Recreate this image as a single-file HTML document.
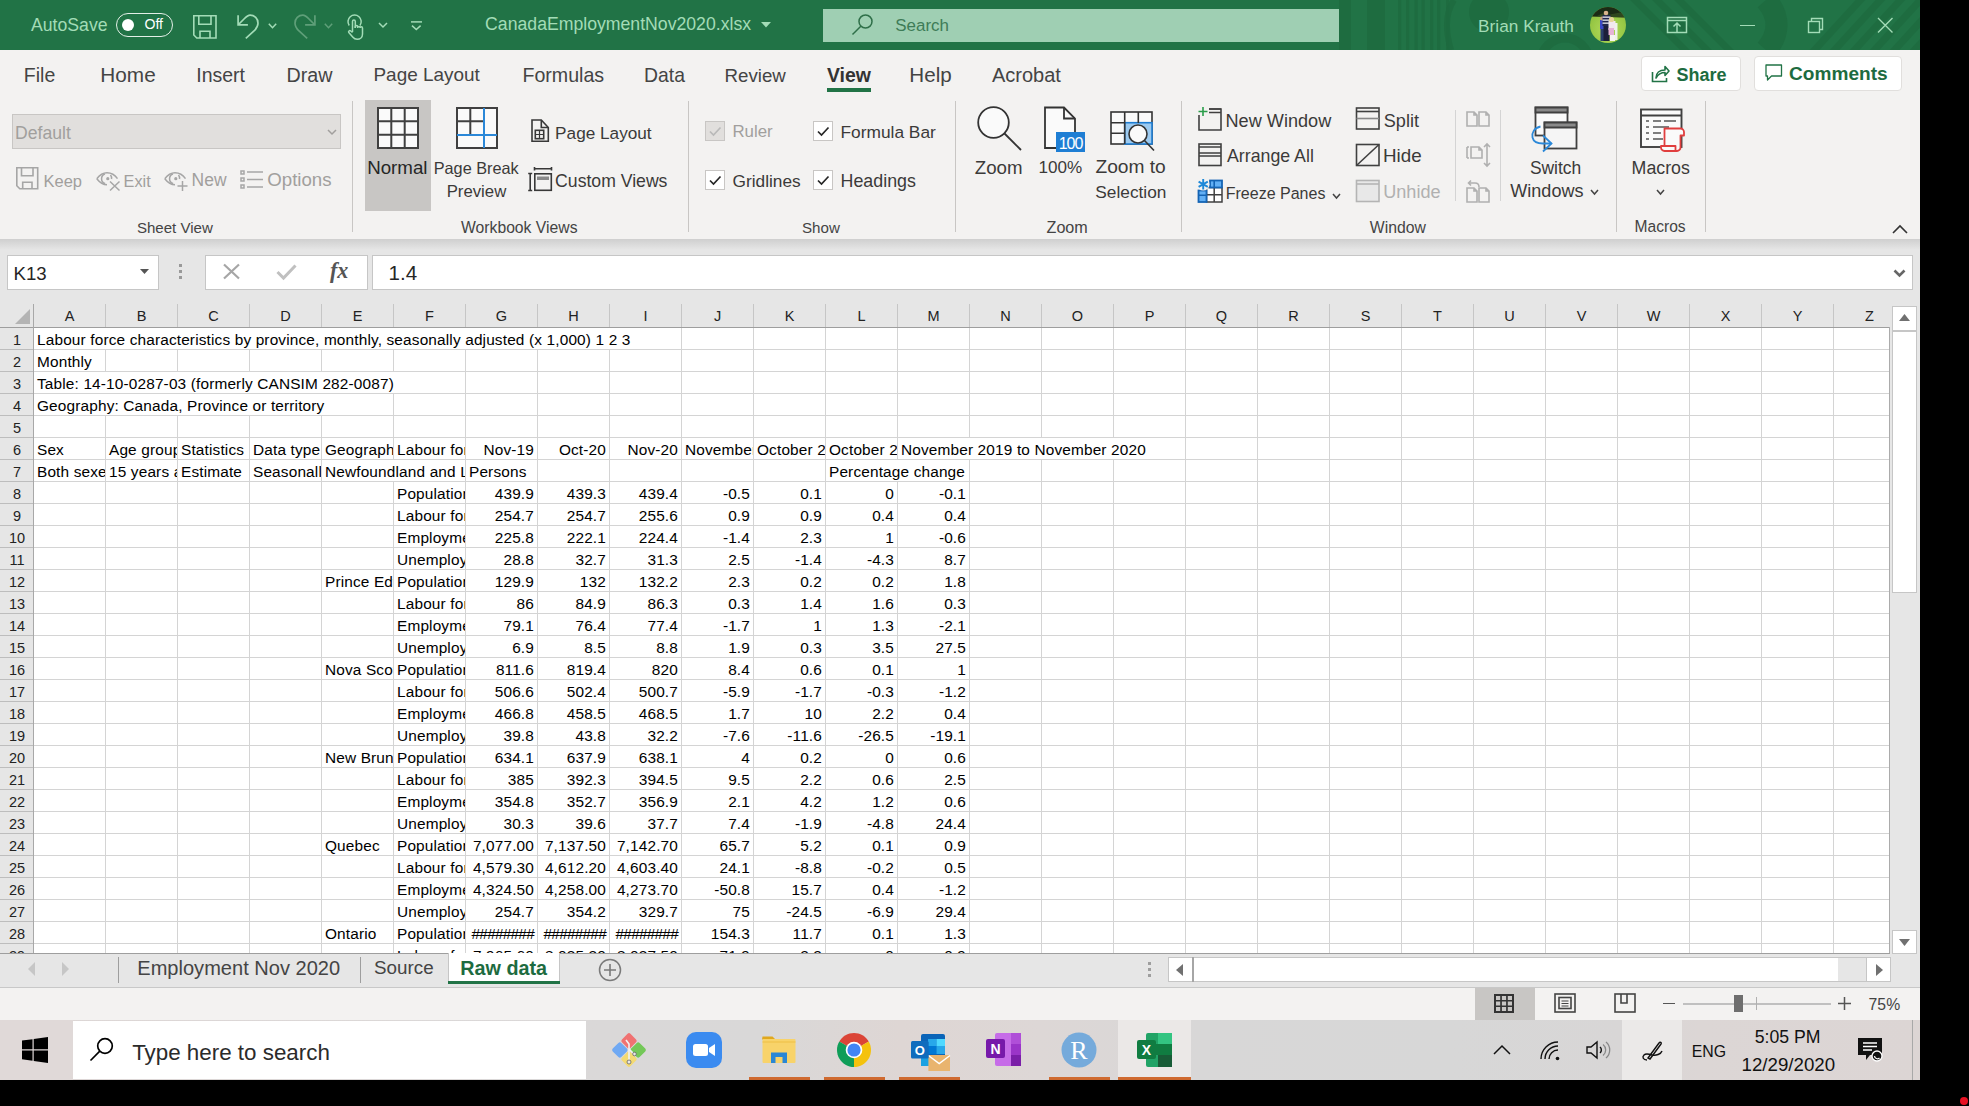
<!DOCTYPE html>
<html><head><meta charset="utf-8"><title>Excel</title>
<style>
html,body{margin:0;padding:0;background:#000}
body{width:1969px;height:1106px;background:#000;position:relative;overflow:hidden;font-family:"Liberation Sans",sans-serif}
.a{position:absolute}
.t{position:absolute;white-space:nowrap;line-height:0}
svg.a{overflow:visible}
.c{position:absolute;height:21px;overflow:hidden;white-space:nowrap;font-size:15.4px;letter-spacing:0.15px;line-height:23.6px;color:#000}
.cl{padding-left:3px;box-sizing:border-box}
.cr{padding-right:3px;box-sizing:border-box;text-align:right}
.h{letter-spacing:-0.75px}
</style></head><body>
<div class="a" style="left:0px;top:0px;width:1920px;height:50px;background:#217346"></div>
<svg class="a" style="left:1330px;top:0px;overflow:hidden" width="590" height="50" viewBox="0 0 590 50"><g fill="#1d6a3f" opacity="0.75"><rect x="9" y="0" width="12" height="50"/><rect x="37" y="0" width="18" height="50"/><rect x="68" y="0" width="3.2" height="50"/><rect x="76" y="0" width="3.2" height="50"/><rect x="84.5" y="0" width="3.2" height="50"/><rect x="91.5" y="0" width="3.2" height="50"/><rect x="100" y="0" width="3.2" height="50"/><rect x="107" y="0" width="3.2" height="50"/><rect x="116" y="0" width="3.2" height="50"/><circle cx="159" cy="12" r="20"/></g><g fill="none" stroke="#1d6a3f" opacity="0.75"><path d="M124 0c-8 12-9 30-3 50" stroke-width="6"/><circle cx="235" cy="62" r="24" stroke-width="9"/><circle cx="310" cy="40" r="140" stroke-width="0"/><path d="M436 0c14 16 14 34 0 50" stroke-width="22"/></g><g stroke="#1d6a3f" stroke-width="7" opacity="0.75"><line x1="300" y1="-5" x2="360" y2="55"/><line x1="322" y1="-5" x2="382" y2="55"/><line x1="344" y1="-5" x2="404" y2="55"/><line x1="480" y1="55" x2="535" y2="-5"/><line x1="500" y1="55" x2="555" y2="-5"/><line x1="520" y1="55" x2="575" y2="-5"/><line x1="540" y1="55" x2="595" y2="-5"/><line x1="560" y1="55" x2="615" y2="-5"/><line x1="580" y1="55" x2="635" y2="-5"/></g></svg>
<div class="t" style="left:31.00px;top:24.87px;font-size:17.67px;color:#a3dcb7;font-weight:400;">AutoSave</div>
<div class="a" style="left:116px;top:12.5px;width:57px;height:24px;border:1.6px solid #e3efe7;border-radius:12px;box-sizing:border-box"></div>
<div class="a" style="left:122px;top:18.5px;width:12px;height:12px;background:#fff;border-radius:50%"></div>
<div class="t" style="left:144.44px;top:24.12px;font-size:14.09px;color:#fff;font-weight:400;">Off</div>
<svg class="a" style="left:193px;top:15px;" width="25" height="25" viewBox="0 0 25 25"><g fill="none" stroke="#a3dcb7" stroke-width="1.6"><path d="M0.8 0.8H23V23H3.8L0.8 20z"/><path d="M5.8 0.8V9.3H18V0.8"/><path d="M7 23V16.3H17V23"/></g></svg>
<svg class="a" style="left:236px;top:14px;" width="24" height="26" viewBox="0 0 24 26"><g fill="none" stroke="#a3dcb7" stroke-width="1.7"><path d="M2.1 1.2V10.8H11.9"/><path d="M2.5 10.5L8 5C10 3 12 1.2 14.1 1.2 18.5 1.2 22 4.5 22 9.2 22 12 20.5 14.5 18 17L9.8 24.3"/></g></svg>
<svg class="a" style="left:268px;top:23px;" width="9" height="6" viewBox="0 0 9 6"><path d="M0.8 0.8l3.7 3.9 3.7-3.9" fill="none" stroke="#a3dcb7" stroke-width="1.5"/></svg>
<svg class="a" style="left:293px;top:14px;" width="24" height="26" viewBox="0 0 24 26"><g fill="none" stroke="#5f9f79" stroke-width="1.7"><path d="M21.9 1.2V10.8H12.1"/><path d="M21.5 10.5L16 5C14 3 12 1.2 9.9 1.2 5.5 1.2 2 4.5 2 9.2 2 12 3.5 14.5 6 17L14.2 24.3"/></g></svg>
<svg class="a" style="left:324px;top:23px;" width="9" height="6" viewBox="0 0 9 6"><path d="M0.8 0.8l3.7 3.9 3.7-3.9" fill="none" stroke="#5f9f79" stroke-width="1.5"/></svg>
<svg class="a" style="left:346px;top:14px;" width="19" height="26" viewBox="0 0 19 26"><g fill="none" stroke="#a3dcb7" stroke-width="1.5" stroke-linejoin="round"><path d="M3.2 11.5A6.6 6.6 0 1 1 14 11.5"/><path d="M6.5 18V7.5a1.4 1.4 0 0 1 2.8 0V14"/><path d="M9.3 14v-1.2a1.2 1.2 0 0 1 2.4 0V14M11.7 13.6a1.2 1.2 0 0 1 2.4 0V14M14.1 14a1.2 1.2 0 0 1 2.4 0V20c0 3.5-2.5 5.3-5.3 5.3-2 0-3.3-0.8-4.5-2.3L2.8 18.6c-0.8-1.2 0.7-2.6 1.9-1.6L6.5 18.5"/></g></svg>
<svg class="a" style="left:378px;top:22px;" width="10" height="6" viewBox="0 0 10 6"><path d="M1 1l4 4 4-4" fill="none" stroke="#a3dcb7" stroke-width="1.5"/></svg>
<svg class="a" style="left:410px;top:14px;" width="13" height="18" viewBox="0 0 13 18"><g fill="none" stroke="#a3dcb7" stroke-width="1.5"><path d="M1 7.9h11"/><path d="M2 11.6l4.3 4 4.3-4"/></g></svg>
<div class="t" style="left:485.12px;top:23.88px;font-size:17.66px;color:#a3dcb7;font-weight:400;">CanadaEmploymentNov2020.xlsx</div>
<svg class="a" style="left:761px;top:22px;" width="10" height="6" viewBox="0 0 10 6"><path d="M0 0h10L5 5.5z" fill="#a3dcb7"/></svg>
<div class="a" style="left:823px;top:9px;width:516px;height:33px;background:#9fcfb3"></div>
<svg class="a" style="left:850px;top:13px;" width="24" height="24" viewBox="0 0 24 24"><g fill="none" stroke="#2f6f49" stroke-width="1.5"><circle cx="15.5" cy="8.5" r="6.5"/><path d="M10.8 13.2L2.5 21.5"/></g></svg>
<div class="t" style="left:895.32px;top:26.13px;font-size:16.93px;color:#3e7c57;font-weight:400;">Search</div>
<div class="t" style="left:1478.12px;top:25.52px;font-size:17.24px;color:#a3dcb7;font-weight:400;">Brian Krauth</div>
<svg class="a" style="left:1590px;top:7px;" width="36" height="36" viewBox="0 0 36 36"><defs><clipPath id="avc"><circle cx="18" cy="18" r="18"/></clipPath><radialGradient id="avg" cx="0.5" cy="0.65" r="0.6"><stop offset="0" stop-color="#b6dc5c"/><stop offset="1" stop-color="#8fc23f"/></radialGradient></defs><g clip-path="url(#avc)"><rect width="36" height="36" fill="url(#avg)"/><path d="M0 0H36V10.5L0 9.5z" fill="#1b2b15"/><path d="M6 9.5l6-3 8 1 10-2 6 5z" fill="#3d5a25" opacity="0.6"/><rect x="10" y="13" width="4.5" height="9" fill="#3b48c8"/><rect x="10.5" y="22" width="3.5" height="12" fill="#2a3f6a"/><circle cx="12" cy="11.5" r="1.9" fill="#c89f7f"/><rect x="12.5" y="8" width="8" height="11" fill="#22264a"/><rect x="12.5" y="9.5" width="8" height="1.3" fill="#e8e8f0"/><rect x="12.5" y="12.5" width="8" height="1.3" fill="#e8e8f0"/><rect x="12.5" y="15.5" width="8" height="1.3" fill="#e8e8f0"/><rect x="13.5" y="19" width="6" height="15" fill="#1c1f3a"/><circle cx="16" cy="6" r="2.3" fill="#d9b38c"/><rect x="18.5" y="14" width="7" height="9" fill="#f2e8ee"/><rect x="18.5" y="21" width="5.5" height="7" fill="#e6b3d6"/><rect x="20" y="28" width="5" height="6" fill="#f5f5f0"/><circle cx="21.5" cy="12.5" r="2.6" fill="#e8d49a"/><rect x="25" y="16" width="2.5" height="17" fill="#eef2ea"/></g></svg>
<svg class="a" style="left:1666px;top:16px;" width="22" height="18" viewBox="0 0 22 18"><g fill="none" stroke="#a3dcb7" stroke-width="1.5"><rect x="1.5" y="1.5" width="19" height="15"/><path d="M1.5 4.5h19"/><path d="M11 16.5V7M7.5 10.5L11 7l3.5 3.5"/></g></svg>
<div class="a" style="left:1739.5px;top:25px;width:15.5px;height:1.3px;background:#a3dcb7"></div>
<svg class="a" style="left:1807px;top:17px;" width="18" height="17" viewBox="0 0 18 17"><g fill="none" stroke="#a3dcb7" stroke-width="1.4"><rect x="1.5" y="4.5" width="11" height="11"/><path d="M4.5 4.5V1.5h11v11h-3"/></g></svg>
<svg class="a" style="left:1877px;top:17px;" width="16" height="16" viewBox="0 0 16 16"><path d="M1 1l14.5 14.5M15.5 1L1 15.5" fill="none" stroke="#a3dcb7" stroke-width="1.4"/></svg>
<div class="a" style="left:0px;top:50px;width:1920px;height:189px;background:#f3f2f1"></div>
<div class="t" style="left:23.84px;top:75.23px;font-size:19.53px;color:#444;font-weight:400;">File</div>
<div class="t" style="left:100.34px;top:74.80px;font-size:20.77px;color:#444;font-weight:400;">Home</div>
<div class="t" style="left:196.25px;top:75.25px;font-size:19.48px;color:#444;font-weight:400;">Insert</div>
<div class="t" style="left:286.42px;top:75.16px;font-size:19.72px;color:#444;font-weight:400;">Draw</div>
<div class="t" style="left:373.48px;top:75.43px;font-size:18.96px;color:#444;font-weight:400;">Page Layout</div>
<div class="t" style="left:522.43px;top:75.20px;font-size:19.62px;color:#444;font-weight:400;">Formulas</div>
<div class="t" style="left:644.05px;top:75.29px;font-size:19.35px;color:#444;font-weight:400;">Data</div>
<div class="t" style="left:724.50px;top:75.51px;font-size:18.71px;color:#444;font-weight:400;">Review</div>
<div class="t" style="left:909.35px;top:74.85px;font-size:20.61px;color:#444;font-weight:400;">Help</div>
<div class="t" style="left:992.00px;top:75.06px;font-size:20.01px;color:#444;font-weight:400;">Acrobat</div>
<div class="t" style="left:827.00px;top:75.26px;font-size:19.44px;color:#333;font-weight:700;">View</div>
<div class="a" style="left:827px;top:88px;width:44px;height:4px;background:#217346"></div>
<div class="a" style="left:1640.5px;top:55.5px;width:100px;height:35px;background:#fff;border:1px solid #e1dfdd;border-radius:4px;box-sizing:border-box"></div>
<svg class="a" style="left:1651px;top:64px;" width="19" height="19" viewBox="0 0 19 19"><g fill="none" stroke="#217346" stroke-width="1.6"><path d="M1.5 8v9.5h14V14"/><path d="M5 14c0-5 3.5-8 9-8V2.5l4 4.5-4 4.5V8.5c-4 0-7 2-9 5.5z" stroke-linejoin="round"/></g></svg>
<div class="t" style="left:1676.44px;top:74.76px;font-size:18.00px;color:#1d6b40;font-weight:700;">Share</div>
<div class="a" style="left:1753.5px;top:55.5px;width:148px;height:35px;background:#fff;border:1px solid #e1dfdd;border-radius:4px;box-sizing:border-box"></div>
<svg class="a" style="left:1765px;top:64px;" width="18" height="18" viewBox="0 0 18 18"><g fill="none" stroke="#217346" stroke-width="1.3"><path d="M1 1h15.5v11H6.5L2.5 16V12H1z" stroke-linejoin="round"/></g></svg>
<div class="t" style="left:1789.04px;top:74.38px;font-size:19.09px;color:#1d6b40;font-weight:700;">Comments</div>
<div class="a" style="left:12px;top:114px;width:329px;height:35px;background:#e1dfdd;border:1px solid #c8c6c4;box-sizing:border-box"></div>
<div class="t" style="left:15.09px;top:132.89px;font-size:17.63px;color:#a19f9d;font-weight:400;">Default</div>
<svg class="a" style="left:327px;top:129px;" width="10" height="6" viewBox="0 0 10 6"><path d="M1 1l4.0 4l4.0 -4" fill="none" stroke="#a19f9d" stroke-width="1.5"/></svg>
<svg class="a" style="left:16px;top:167px;" width="23" height="23" viewBox="0 0 23 23"><g fill="none" stroke="#a6a6a6" stroke-width="1.6"><path d="M0.8 0.8H21.7V21.7H3.8L0.8 18.7z"/><path d="M5.5 0.8V8.8H17V0.8"/><path d="M6.7 21.7V15.3H16V21.7"/></g></svg>
<div class="t" style="left:43.48px;top:180.78px;font-size:16.49px;color:#a19f9d;font-weight:400;">Keep</div>
<svg class="a" style="left:96px;top:171px;" width="25" height="21" viewBox="0 0 25 21"><g fill="none" stroke="#a6a6a6" stroke-width="1.5"><path d="M0.8 7.7C4 3.5 8 1.8 11 1.8s7.5 1.5 10.5 5.9"/><path d="M0.8 7.7C4 11.8 8 13.7 11 13.7"/><path d="M9 3a5 5 0 0 0 0 9.5"/><path d="M14.5 4a5 5 0 0 1 1 4"/></g><circle cx="11.8" cy="7.7" r="1.6" fill="#a6a6a6"/><path d="M14 10.5l9.5 9M23.5 10.5l-9.5 9" stroke="#a6a6a6" stroke-width="1.5"/></svg>
<div class="t" style="left:123.60px;top:180.85px;font-size:16.30px;color:#a19f9d;font-weight:400;">Exit</div>
<svg class="a" style="left:164px;top:171px;" width="25" height="21" viewBox="0 0 25 21"><g fill="none" stroke="#a6a6a6" stroke-width="1.5"><path d="M0.8 7.7C4 3.5 8 1.8 11 1.8s7.5 1.5 10.5 5.9"/><path d="M0.8 7.7C4 11.8 8 13.7 11 13.7"/><path d="M9 3a5 5 0 0 0 0 9.5"/><path d="M14.5 4a5 5 0 0 1 1 4"/></g><circle cx="11.8" cy="7.7" r="1.6" fill="#a6a6a6"/><path d="M18.5 10v10M13.5 15h10" stroke="#a6a6a6" stroke-width="1.5"/></svg>
<div class="t" style="left:191.60px;top:180.44px;font-size:17.48px;color:#a19f9d;font-weight:400;">New</div>
<svg class="a" style="left:240px;top:170px;" width="23" height="19" viewBox="0 0 23 19"><g fill="none" stroke="#a6a6a6" stroke-width="1.5"><rect x="1" y="1" width="3" height="3"/><rect x="1" y="8" width="3" height="3"/><rect x="1" y="15" width="3" height="3"/><path d="M7 2h16M7 9.5h16M7 17h16"/></g></svg>
<div class="t" style="left:267.25px;top:180.03px;font-size:18.66px;color:#a19f9d;font-weight:400;">Options</div>
<div class="t" style="left:136.90px;top:227.77px;font-size:15.07px;color:#444;font-weight:400;">Sheet View</div>
<div class="a" style="left:352px;top:101px;width:1px;height:131px;background:#c8c6c4"></div>
<div class="a" style="left:365px;top:100px;width:66px;height:111px;background:#c8c6c4"></div>
<svg class="a" style="left:377px;top:107px;" width="42" height="42" viewBox="0 0 42 42"><rect x="1" y="1" width="40" height="40" fill="#fafafa"/><g fill="none" stroke="#404040" stroke-width="2"><rect x="1" y="1" width="40" height="40"/><path d="M14.3 1v40M27.7 1v40M1 14.3h40M1 27.7h40"/></g></svg>
<div class="t" style="left:367.20px;top:167.51px;font-size:18.73px;color:#262626;font-weight:400;">Normal</div>
<svg class="a" style="left:456px;top:107px;" width="42" height="42" viewBox="0 0 42 42"><rect x="1" y="1" width="40" height="40" fill="#fafafa"/><g fill="none" stroke="#404040" stroke-width="2"><rect x="1" y="1" width="40" height="40"/><path d="M14.3 1v27M1 14.3h27"/></g><g stroke="#2b88d8" stroke-width="2"><path d="M28 1v40M1 28h40"/></g></svg>
<div class="t" style="left:433.70px;top:168.36px;font-size:16.27px;color:#3b3a39;font-weight:400;">Page Break</div>
<div class="t" style="left:446.66px;top:192.19px;font-size:16.76px;color:#3b3a39;font-weight:400;">Preview</div>
<svg class="a" style="left:530px;top:118px;" width="20" height="26" viewBox="0 0 20 26"><g fill="none" stroke="#383838" stroke-width="1.6"><path d="M2 2h9.3l7 7.5v13.8H2z"/><path d="M11.3 2v7.5h7"/><rect x="5.3" y="12.3" width="8.4" height="8.4"/><path d="M9.5 12.3v8.4M5.3 16.5h8.4" stroke-width="1.2"/></g></svg>
<div class="t" style="left:555.12px;top:132.53px;font-size:17.21px;color:#3b3a39;font-weight:400;">Page Layout</div>
<svg class="a" style="left:527px;top:166px;" width="26" height="26" viewBox="0 0 26 26"><g fill="none" stroke="#383838" stroke-width="1.6"><path d="M3.2 7.5V24.5M1.2 7.5h4M1.2 24.5h4"/><path d="M7.5 2.8H24.5M7.5 1v3.6M24.5 1v3.6"/><rect x="7.8" y="7.8" width="16.5" height="16.5"/></g><rect x="10" y="10.5" width="12" height="3.5" fill="#8a8a8a"/></svg>
<div class="t" style="left:555.12px;top:180.88px;font-size:17.64px;color:#3b3a39;font-weight:400;">Custom Views</div>
<div class="t" style="left:461.00px;top:227.55px;font-size:15.72px;color:#444;font-weight:400;">Workbook Views</div>
<div class="a" style="left:688px;top:101px;width:1px;height:131px;background:#c8c6c4"></div>
<div class="a" style="left:705px;top:121px;width:20px;height:20px;background:#e1dfdd;border:1.5px solid #c8c6c4;box-sizing:border-box"></div>
<svg class="a" style="left:705px;top:121px;" width="20" height="20" viewBox="0 0 20 20"><path d="M5 10.5l3.5 3.5 7-7.5" fill="none" stroke="#b9b9b9" stroke-width="1.7"/></svg>
<div class="t" style="left:732.45px;top:132.16px;font-size:16.85px;color:#a19f9d;font-weight:400;">Ruler</div>
<div class="a" style="left:813px;top:121px;width:20px;height:20px;background:#fff;border:1.5px solid #c8c6c4;box-sizing:border-box"></div>
<svg class="a" style="left:813px;top:121px;" width="20" height="20" viewBox="0 0 20 20"><path d="M5 10.5l3.5 3.5 7-7.5" fill="none" stroke="#262626" stroke-width="1.7"/></svg>
<div class="t" style="left:840.51px;top:131.99px;font-size:17.34px;color:#3b3a39;font-weight:400;">Formula Bar</div>
<div class="a" style="left:705px;top:170px;width:20px;height:20px;background:#fff;border:1.5px solid #c8c6c4;box-sizing:border-box"></div>
<svg class="a" style="left:705px;top:170px;" width="20" height="20" viewBox="0 0 20 20"><path d="M5 10.5l3.5 3.5 7-7.5" fill="none" stroke="#262626" stroke-width="1.7"/></svg>
<div class="t" style="left:732.54px;top:181.01px;font-size:17.28px;color:#3b3a39;font-weight:400;">Gridlines</div>
<div class="a" style="left:813px;top:170px;width:20px;height:20px;background:#fff;border:1.5px solid #c8c6c4;box-sizing:border-box"></div>
<svg class="a" style="left:813px;top:170px;" width="20" height="20" viewBox="0 0 20 20"><path d="M5 10.5l3.5 3.5 7-7.5" fill="none" stroke="#262626" stroke-width="1.7"/></svg>
<div class="t" style="left:840.57px;top:180.82px;font-size:17.84px;color:#3b3a39;font-weight:400;">Headings</div>
<div class="t" style="left:801.99px;top:227.75px;font-size:15.15px;color:#444;font-weight:400;">Show</div>
<div class="a" style="left:955px;top:101px;width:1px;height:131px;background:#c8c6c4"></div>
<svg class="a" style="left:977px;top:106px;" width="46" height="46" viewBox="0 0 46 46"><g fill="#fafafa" stroke="#333" stroke-width="1.8"><circle cx="16.5" cy="16.5" r="15.3"/><path d="M27.5 27.5L44 44" fill="none"/></g></svg>
<div class="t" style="left:974.74px;top:167.51px;font-size:18.72px;color:#3b3a39;font-weight:400;">Zoom</div>
<svg class="a" style="left:1044px;top:106px;" width="42" height="47" viewBox="0 0 42 47"><path d="M1 1.5h19l11 11V42H1z" fill="#fafafa" stroke="#333" stroke-width="1.8"/><path d="M20 1.5v11h11" fill="none" stroke="#333" stroke-width="1.8"/><rect x="12" y="26" width="29" height="20" fill="#1e7ed4"/><text x="26.5" y="42.5" font-family="Liberation Sans" font-size="16" fill="#fff" text-anchor="middle" letter-spacing="-1">100</text></svg>
<div class="t" style="left:1038.60px;top:168.08px;font-size:17.08px;color:#3b3a39;font-weight:400;">100%</div>
<svg class="a" style="left:1110px;top:111px;" width="46" height="41" viewBox="0 0 46 41"><g fill="#fafafa" stroke="#333" stroke-width="1.6"><rect x="1" y="1" width="41" height="32"/></g><rect x="14.7" y="11.7" width="27.3" height="21.3" fill="#9ccaf0" stroke="#1e7ed4" stroke-width="1.6"/><g stroke="#333" stroke-width="1.6" fill="none"><path d="M14.7 1v32M28.3 1v11M1 11.7h14M1 22.3h14"/></g><circle cx="28" cy="23" r="9" fill="#fafafa" stroke="#333" stroke-width="1.6"/><path d="M34.5 29.5L44 39.5" stroke="#333" stroke-width="1.6"/></svg>
<div class="t" style="left:1095.42px;top:167.34px;font-size:19.21px;color:#3b3a39;font-weight:400;">Zoom to</div>
<div class="t" style="left:1095.31px;top:192.00px;font-size:17.30px;color:#3b3a39;font-weight:400;">Selection</div>
<div class="t" style="left:1046.52px;top:227.40px;font-size:16.16px;color:#444;font-weight:400;">Zoom</div>
<div class="a" style="left:1181px;top:101px;width:1px;height:131px;background:#c8c6c4"></div>
<svg class="a" style="left:1197px;top:106px;" width="27" height="25" viewBox="0 0 27 25"><g fill="none" stroke="#404040" stroke-width="1.6"><path d="M2 9v15h22V3H12"/><path d="M12 3h12M12 6.5h12" stroke-width="1.4"/></g><path d="M6 1v9M1.5 5.5h9" stroke="#2a9d4a" stroke-width="1.6"/></svg>
<div class="t" style="left:1225.55px;top:120.71px;font-size:18.13px;color:#3b3a39;font-weight:400;">New Window</div>
<svg class="a" style="left:1197px;top:142px;" width="27" height="25" viewBox="0 0 27 25"><g fill="none" stroke="#404040" stroke-width="1.6"><rect x="2" y="2" width="22" height="21.5"/><path d="M2 5h22M2 11h22M2 14h22"/></g></svg>
<div class="t" style="left:1227.00px;top:156.35px;font-size:17.75px;color:#3b3a39;font-weight:400;">Arrange All</div>
<svg class="a" style="left:1197px;top:178px;" width="27" height="25" viewBox="0 0 27 25"><g fill="#ffffff" stroke="#404040" stroke-width="1.5"><path d="M9.5 9.5H25V24H9.5z"/><path d="M17.2 9.5V24M9.5 16.7H25" fill="none"/></g><g fill="#62b0f5" stroke="#1464b4" stroke-width="1.8"><rect x="13" y="2.5" width="12" height="7"/><rect x="1.5" y="12.5" width="8" height="11.5"/></g><path d="M17.2 2.5v7M1.5 17.2h8" stroke="#1464b4" stroke-width="1.6"/><circle cx="6.2" cy="6.3" r="6.3" fill="#f3f2f1"/><g stroke="#1e88d8" stroke-width="1.9"><path d="M6.2 1v10.6M1.6 3.6l9.2 5.3M1.6 8.9l9.2-5.3"/></g></svg>
<div class="t" style="left:1225.72px;top:192.94px;font-size:16.02px;color:#3b3a39;font-weight:400;">Freeze Panes</div>
<svg class="a" style="left:1332px;top:193px;" width="9" height="6" viewBox="0 0 9 6"><path d="M1 1l3.5 4l3.5 -4" fill="none" stroke="#444" stroke-width="1.5"/></svg>
<svg class="a" style="left:1355px;top:106px;" width="26" height="25" viewBox="0 0 26 25"><g fill="none" stroke="#404040" stroke-width="1.6"><rect x="1.5" y="2" width="22.5" height="21"/><path d="M1.5 5.5h22.5"/><path d="M1.5 12.5h22.5" stroke="#888"/></g></svg>
<div class="t" style="left:1383.78px;top:120.73px;font-size:18.09px;color:#3b3a39;font-weight:400;">Split</div>
<svg class="a" style="left:1355px;top:143px;" width="26" height="24" viewBox="0 0 26 24"><g fill="none" stroke="#404040" stroke-width="1.6"><rect x="1.5" y="1.5" width="22.5" height="21"/><path d="M1.5 22.5L24 1.5"/></g></svg>
<div class="t" style="left:1383.00px;top:155.98px;font-size:18.81px;color:#3b3a39;font-weight:400;">Hide</div>
<svg class="a" style="left:1355px;top:179px;" width="26" height="24" viewBox="0 0 26 24"><rect x="1.5" y="1.5" width="22.5" height="21" fill="#e8e8e8" stroke="#b4b4b4" stroke-width="1.6"/><path d="M1.5 5h22.5" stroke="#b4b4b4" stroke-width="1.6"/></svg>
<div class="t" style="left:1383.23px;top:192.22px;font-size:18.12px;color:#b0b0b0;font-weight:400;">Unhide</div>
<div class="t" style="left:1369.80px;top:227.53px;font-size:15.77px;color:#444;font-weight:400;">Window</div>
<div class="a" style="left:1455px;top:110px;width:1px;height:91px;background:#d4d4d4"></div>
<div class="a" style="left:1500px;top:110px;width:1px;height:91px;background:#d4d4d4"></div>
<svg class="a" style="left:1466px;top:111px;" width="25" height="16" viewBox="0 0 25 16"><g fill="none" stroke="#b0b0b0" stroke-width="1.6"><path d="M1 1h7l3 3v11H1zM8 1v3h3"/><path d="M13 1h7l3 3v11H13zM20 1v3h3"/></g></svg>
<svg class="a" style="left:1466px;top:143px;" width="25" height="24" viewBox="0 0 25 24"><g fill="none" stroke="#b0b0b0" stroke-width="1.6"><path d="M1 4v11M1 4h2M1 15h2"/><path d="M5 4h8l3 3v8H5zM13 4v3h3"/><path d="M21 1v22M18 4l3-3 3 3M18 20l3 3 3-3"/></g></svg>
<svg class="a" style="left:1466px;top:179px;" width="25" height="24" viewBox="0 0 25 24"><g fill="none" stroke="#b0b0b0" stroke-width="1.6"><path d="M1 9h7l3 3v11H1zM8 9v3h3"/><path d="M13 9h7l3 3v11H13zM20 9v3h3"/><path d="M3 4h6c3 0 4 1.5 4 4M5 1.5L2.5 4 5 6.5"/></g></svg>
<svg class="a" style="left:1531px;top:106px;" width="47" height="47" viewBox="0 0 47 47"><rect x="4.5" y="1.5" width="32" height="28" fill="#fafafa" stroke="#404040" stroke-width="1.8"/><rect x="4.5" y="1.5" width="32" height="5" fill="#8a8a8a"/><rect x="13.5" y="16.5" width="32" height="26" fill="#f5f5f5" stroke="#404040" stroke-width="1.8"/><rect x="13.5" y="16.5" width="32" height="5" fill="#8a8a8a"/><path d="M4.5 1.5h32v5h-32zM13.5 16.5h32v5h-32z" fill="none" stroke="#404040" stroke-width="1.8"/><g fill="none" stroke="#2b88d8" stroke-width="1.8"><path d="M9.5 20.5C3 22 0.5 27 1.5 31.5S6.5 37.5 12 37.5h8.5"/><path d="M12 29.5l8.5 8-8.5 8"/></g></svg>
<div class="t" style="left:1529.90px;top:167.95px;font-size:17.44px;color:#3b3a39;font-weight:400;">Switch</div>
<div class="t" style="left:1510.30px;top:191.24px;font-size:18.05px;color:#3b3a39;font-weight:400;">Windows</div>
<svg class="a" style="left:1590px;top:189px;" width="9" height="6" viewBox="0 0 9 6"><path d="M1 1l3.5 4l3.5 -4" fill="none" stroke="#444" stroke-width="1.5"/></svg>
<div class="a" style="left:1616px;top:101px;width:1px;height:131px;background:#c8c6c4"></div>
<svg class="a" style="left:1639px;top:107px;" width="48" height="46" viewBox="0 0 48 46"><rect x="2" y="2.5" width="40.5" height="37.5" fill="#fafafa" stroke="#404040" stroke-width="1.9"/><path d="M2 8.5h40.5" stroke="#404040" stroke-width="1.9"/><g stroke="#555" stroke-width="1.7"><path d="M7 14h3M14 14h8M25 14h12M7 20h3M14 20h16M7 26h3M14 26h8M7 32h3M14 32h10"/></g><path d="M25.5 38.5V21.5H41.5a3.5 3.5 0 0 1 3.5 3.5v3.5h-3.5V40.5a3.5 3.5 0 0 1-3.5 3.5H25.5a3.5 3.5 0 0 1-3.5-3.5v-1.5H36.5v5" fill="#fafafa" stroke="#e03e3e" stroke-width="1.8" stroke-linejoin="round"/></svg>
<div class="t" style="left:1631.58px;top:167.84px;font-size:17.77px;color:#3b3a39;font-weight:400;">Macros</div>
<svg class="a" style="left:1656px;top:189px;" width="9" height="6" viewBox="0 0 9 6"><path d="M1 1l3.5 4l3.5 -4" fill="none" stroke="#444" stroke-width="1.5"/></svg>
<div class="t" style="left:1634.55px;top:227.09px;font-size:15.59px;color:#444;font-weight:400;">Macros</div>
<div class="a" style="left:1705px;top:101px;width:1px;height:131px;background:#c8c6c4"></div>
<svg class="a" style="left:1892px;top:224px;" width="16" height="10" viewBox="0 0 16 10"><path d="M1 9l7-7 7 7" fill="none" stroke="#333" stroke-width="1.6"/></svg>
<div class="a" style="left:0px;top:239px;width:1920px;height:65px;background:#e6e6e6"></div>
<div class="a" style="left:0px;top:239px;width:1920px;height:11px;background:linear-gradient(#cfcfcf,#e6e6e6)"></div>
<div class="a" style="left:7px;top:255px;width:152px;height:35px;background:#fff;border:1px solid #c6c6c6;box-sizing:border-box"></div>
<div class="t" style="left:13.51px;top:273.54px;font-size:18.64px;color:#262626;font-weight:400;">K13</div>
<svg class="a" style="left:140px;top:269px;" width="9" height="6" viewBox="0 0 9 6"><path d="M0 0h9L4.5 5z" fill="#555"/></svg>
<div class="a" style="left:179px;top:264px;width:3px;height:3px;background:#999"></div>
<div class="a" style="left:179px;top:270px;width:3px;height:3px;background:#999"></div>
<div class="a" style="left:179px;top:276px;width:3px;height:3px;background:#999"></div>
<div class="a" style="left:205px;top:255px;width:163px;height:35px;background:#fff;border:1px solid #c6c6c6;box-sizing:border-box"></div>
<svg class="a" style="left:222px;top:263px;" width="19" height="17" viewBox="0 0 19 17"><path d="M2 1.5l15 14M17 1.5l-15 14" fill="none" stroke="#a6a6a6" stroke-width="2.2"/></svg>
<svg class="a" style="left:276px;top:264px;" width="21" height="16" viewBox="0 0 21 16"><path d="M1.5 8l6 6L19.5 1.5" fill="none" stroke="#c0c0c0" stroke-width="3"/></svg>
<div class="t" style="left:330.00px;top:271.34px;font-size:22.09px;color:#555;font-weight:700;font-family:'Liberation Serif',serif;"><i>fx</i></div>
<div class="a" style="left:372px;top:255px;width:1541px;height:35px;background:#fff;border:1px solid #c6c6c6;box-sizing:border-box"></div>
<div class="t" style="left:388.56px;top:272.87px;font-size:20.56px;color:#262626;font-weight:400;">1.4</div>
<svg class="a" style="left:1893px;top:269px;" width="13" height="10" viewBox="0 0 13 10"><path d="M1.5 1.5l5 5 5-5" fill="none" stroke="#666" stroke-width="2.6"/></svg>
<div class="a" style="left:0px;top:304px;width:1890px;height:23px;background:#e6e6e6"></div>
<div class="a" style="left:0px;top:327px;width:1890px;height:1px;background:#9e9e9e"></div>
<div class="a" style="left:0px;top:328px;width:33px;height:625px;background:#e6e6e6"></div>
<div class="a" style="left:33px;top:304px;width:1px;height:649px;background:#a8a8a8"></div>
<svg class="a" style="left:14px;top:308px;" width="17" height="17" viewBox="0 0 17 17"><path d="M1 16L16 1v15z" fill="#b4b4b4"/></svg>
<div class="a" style="left:105px;top:304px;width:1px;height:23px;background:#c6c6c6"></div>
<div class="t" style="left:34px;width:71px;text-align:center;top:315.57px;font-size:14.5px;color:#222">A</div>
<div class="a" style="left:177px;top:304px;width:1px;height:23px;background:#c6c6c6"></div>
<div class="t" style="left:106px;width:71px;text-align:center;top:315.57px;font-size:14.5px;color:#222">B</div>
<div class="a" style="left:249px;top:304px;width:1px;height:23px;background:#c6c6c6"></div>
<div class="t" style="left:178px;width:71px;text-align:center;top:315.57px;font-size:14.5px;color:#222">C</div>
<div class="a" style="left:321px;top:304px;width:1px;height:23px;background:#c6c6c6"></div>
<div class="t" style="left:250px;width:71px;text-align:center;top:315.57px;font-size:14.5px;color:#222">D</div>
<div class="a" style="left:393px;top:304px;width:1px;height:23px;background:#c6c6c6"></div>
<div class="t" style="left:322px;width:71px;text-align:center;top:315.57px;font-size:14.5px;color:#222">E</div>
<div class="a" style="left:465px;top:304px;width:1px;height:23px;background:#c6c6c6"></div>
<div class="t" style="left:394px;width:71px;text-align:center;top:315.57px;font-size:14.5px;color:#222">F</div>
<div class="a" style="left:537px;top:304px;width:1px;height:23px;background:#c6c6c6"></div>
<div class="t" style="left:466px;width:71px;text-align:center;top:315.57px;font-size:14.5px;color:#222">G</div>
<div class="a" style="left:609px;top:304px;width:1px;height:23px;background:#c6c6c6"></div>
<div class="t" style="left:538px;width:71px;text-align:center;top:315.57px;font-size:14.5px;color:#222">H</div>
<div class="a" style="left:681px;top:304px;width:1px;height:23px;background:#c6c6c6"></div>
<div class="t" style="left:610px;width:71px;text-align:center;top:315.57px;font-size:14.5px;color:#222">I</div>
<div class="a" style="left:753px;top:304px;width:1px;height:23px;background:#c6c6c6"></div>
<div class="t" style="left:682px;width:71px;text-align:center;top:315.57px;font-size:14.5px;color:#222">J</div>
<div class="a" style="left:825px;top:304px;width:1px;height:23px;background:#c6c6c6"></div>
<div class="t" style="left:754px;width:71px;text-align:center;top:315.57px;font-size:14.5px;color:#222">K</div>
<div class="a" style="left:897px;top:304px;width:1px;height:23px;background:#c6c6c6"></div>
<div class="t" style="left:826px;width:71px;text-align:center;top:315.57px;font-size:14.5px;color:#222">L</div>
<div class="a" style="left:969px;top:304px;width:1px;height:23px;background:#c6c6c6"></div>
<div class="t" style="left:898px;width:71px;text-align:center;top:315.57px;font-size:14.5px;color:#222">M</div>
<div class="a" style="left:1041px;top:304px;width:1px;height:23px;background:#c6c6c6"></div>
<div class="t" style="left:970px;width:71px;text-align:center;top:315.57px;font-size:14.5px;color:#222">N</div>
<div class="a" style="left:1113px;top:304px;width:1px;height:23px;background:#c6c6c6"></div>
<div class="t" style="left:1042px;width:71px;text-align:center;top:315.57px;font-size:14.5px;color:#222">O</div>
<div class="a" style="left:1185px;top:304px;width:1px;height:23px;background:#c6c6c6"></div>
<div class="t" style="left:1114px;width:71px;text-align:center;top:315.57px;font-size:14.5px;color:#222">P</div>
<div class="a" style="left:1257px;top:304px;width:1px;height:23px;background:#c6c6c6"></div>
<div class="t" style="left:1186px;width:71px;text-align:center;top:315.57px;font-size:14.5px;color:#222">Q</div>
<div class="a" style="left:1329px;top:304px;width:1px;height:23px;background:#c6c6c6"></div>
<div class="t" style="left:1258px;width:71px;text-align:center;top:315.57px;font-size:14.5px;color:#222">R</div>
<div class="a" style="left:1401px;top:304px;width:1px;height:23px;background:#c6c6c6"></div>
<div class="t" style="left:1330px;width:71px;text-align:center;top:315.57px;font-size:14.5px;color:#222">S</div>
<div class="a" style="left:1473px;top:304px;width:1px;height:23px;background:#c6c6c6"></div>
<div class="t" style="left:1402px;width:71px;text-align:center;top:315.57px;font-size:14.5px;color:#222">T</div>
<div class="a" style="left:1545px;top:304px;width:1px;height:23px;background:#c6c6c6"></div>
<div class="t" style="left:1474px;width:71px;text-align:center;top:315.57px;font-size:14.5px;color:#222">U</div>
<div class="a" style="left:1617px;top:304px;width:1px;height:23px;background:#c6c6c6"></div>
<div class="t" style="left:1546px;width:71px;text-align:center;top:315.57px;font-size:14.5px;color:#222">V</div>
<div class="a" style="left:1689px;top:304px;width:1px;height:23px;background:#c6c6c6"></div>
<div class="t" style="left:1618px;width:71px;text-align:center;top:315.57px;font-size:14.5px;color:#222">W</div>
<div class="a" style="left:1761px;top:304px;width:1px;height:23px;background:#c6c6c6"></div>
<div class="t" style="left:1690px;width:71px;text-align:center;top:315.57px;font-size:14.5px;color:#222">X</div>
<div class="a" style="left:1833px;top:304px;width:1px;height:23px;background:#c6c6c6"></div>
<div class="t" style="left:1762px;width:71px;text-align:center;top:315.57px;font-size:14.5px;color:#222">Y</div>
<div class="t" style="left:1834px;width:71px;text-align:center;top:315.57px;font-size:14.5px;color:#222">Z</div>
<div class="a" style="left:34px;top:328px;width:1855px;height:625px;background-color:#fff;background-image:repeating-linear-gradient(to right,transparent 0 71px,#d4d4d4 71px 72px),repeating-linear-gradient(to bottom,transparent 0 21px,#d4d4d4 21px 22px)"></div>
<div class="a" style="left:1889px;top:327px;width:1px;height:626px;background:#ababab"></div>
<div class="a" style="left:0px;top:349px;width:33px;height:1px;background:#bdbdbd"></div>
<div class="t" style="left:0px;width:34px;text-align:center;top:339.97px;font-size:14.5px;color:#222">1</div>
<div class="a" style="left:0px;top:371px;width:33px;height:1px;background:#bdbdbd"></div>
<div class="t" style="left:0px;width:34px;text-align:center;top:361.97px;font-size:14.5px;color:#222">2</div>
<div class="a" style="left:0px;top:393px;width:33px;height:1px;background:#bdbdbd"></div>
<div class="t" style="left:0px;width:34px;text-align:center;top:383.97px;font-size:14.5px;color:#222">3</div>
<div class="a" style="left:0px;top:415px;width:33px;height:1px;background:#bdbdbd"></div>
<div class="t" style="left:0px;width:34px;text-align:center;top:405.97px;font-size:14.5px;color:#222">4</div>
<div class="a" style="left:0px;top:437px;width:33px;height:1px;background:#bdbdbd"></div>
<div class="t" style="left:0px;width:34px;text-align:center;top:427.97px;font-size:14.5px;color:#222">5</div>
<div class="a" style="left:0px;top:459px;width:33px;height:1px;background:#bdbdbd"></div>
<div class="t" style="left:0px;width:34px;text-align:center;top:449.97px;font-size:14.5px;color:#222">6</div>
<div class="a" style="left:0px;top:481px;width:33px;height:1px;background:#bdbdbd"></div>
<div class="t" style="left:0px;width:34px;text-align:center;top:471.97px;font-size:14.5px;color:#222">7</div>
<div class="a" style="left:0px;top:503px;width:33px;height:1px;background:#bdbdbd"></div>
<div class="t" style="left:0px;width:34px;text-align:center;top:493.97px;font-size:14.5px;color:#222">8</div>
<div class="a" style="left:0px;top:525px;width:33px;height:1px;background:#bdbdbd"></div>
<div class="t" style="left:0px;width:34px;text-align:center;top:515.97px;font-size:14.5px;color:#222">9</div>
<div class="a" style="left:0px;top:547px;width:33px;height:1px;background:#bdbdbd"></div>
<div class="t" style="left:0px;width:34px;text-align:center;top:537.97px;font-size:14.5px;color:#222">10</div>
<div class="a" style="left:0px;top:569px;width:33px;height:1px;background:#bdbdbd"></div>
<div class="t" style="left:0px;width:34px;text-align:center;top:559.97px;font-size:14.5px;color:#222">11</div>
<div class="a" style="left:0px;top:591px;width:33px;height:1px;background:#bdbdbd"></div>
<div class="t" style="left:0px;width:34px;text-align:center;top:581.97px;font-size:14.5px;color:#222">12</div>
<div class="a" style="left:0px;top:613px;width:33px;height:1px;background:#bdbdbd"></div>
<div class="t" style="left:0px;width:34px;text-align:center;top:603.97px;font-size:14.5px;color:#222">13</div>
<div class="a" style="left:0px;top:635px;width:33px;height:1px;background:#bdbdbd"></div>
<div class="t" style="left:0px;width:34px;text-align:center;top:625.97px;font-size:14.5px;color:#222">14</div>
<div class="a" style="left:0px;top:657px;width:33px;height:1px;background:#bdbdbd"></div>
<div class="t" style="left:0px;width:34px;text-align:center;top:647.97px;font-size:14.5px;color:#222">15</div>
<div class="a" style="left:0px;top:679px;width:33px;height:1px;background:#bdbdbd"></div>
<div class="t" style="left:0px;width:34px;text-align:center;top:669.97px;font-size:14.5px;color:#222">16</div>
<div class="a" style="left:0px;top:701px;width:33px;height:1px;background:#bdbdbd"></div>
<div class="t" style="left:0px;width:34px;text-align:center;top:691.97px;font-size:14.5px;color:#222">17</div>
<div class="a" style="left:0px;top:723px;width:33px;height:1px;background:#bdbdbd"></div>
<div class="t" style="left:0px;width:34px;text-align:center;top:713.97px;font-size:14.5px;color:#222">18</div>
<div class="a" style="left:0px;top:745px;width:33px;height:1px;background:#bdbdbd"></div>
<div class="t" style="left:0px;width:34px;text-align:center;top:735.97px;font-size:14.5px;color:#222">19</div>
<div class="a" style="left:0px;top:767px;width:33px;height:1px;background:#bdbdbd"></div>
<div class="t" style="left:0px;width:34px;text-align:center;top:757.97px;font-size:14.5px;color:#222">20</div>
<div class="a" style="left:0px;top:789px;width:33px;height:1px;background:#bdbdbd"></div>
<div class="t" style="left:0px;width:34px;text-align:center;top:779.97px;font-size:14.5px;color:#222">21</div>
<div class="a" style="left:0px;top:811px;width:33px;height:1px;background:#bdbdbd"></div>
<div class="t" style="left:0px;width:34px;text-align:center;top:801.97px;font-size:14.5px;color:#222">22</div>
<div class="a" style="left:0px;top:833px;width:33px;height:1px;background:#bdbdbd"></div>
<div class="t" style="left:0px;width:34px;text-align:center;top:823.97px;font-size:14.5px;color:#222">23</div>
<div class="a" style="left:0px;top:855px;width:33px;height:1px;background:#bdbdbd"></div>
<div class="t" style="left:0px;width:34px;text-align:center;top:845.97px;font-size:14.5px;color:#222">24</div>
<div class="a" style="left:0px;top:877px;width:33px;height:1px;background:#bdbdbd"></div>
<div class="t" style="left:0px;width:34px;text-align:center;top:867.97px;font-size:14.5px;color:#222">25</div>
<div class="a" style="left:0px;top:899px;width:33px;height:1px;background:#bdbdbd"></div>
<div class="t" style="left:0px;width:34px;text-align:center;top:889.97px;font-size:14.5px;color:#222">26</div>
<div class="a" style="left:0px;top:921px;width:33px;height:1px;background:#bdbdbd"></div>
<div class="t" style="left:0px;width:34px;text-align:center;top:911.97px;font-size:14.5px;color:#222">27</div>
<div class="a" style="left:0px;top:943px;width:33px;height:1px;background:#bdbdbd"></div>
<div class="t" style="left:0px;width:34px;text-align:center;top:933.97px;font-size:14.5px;color:#222">28</div>
<div class="t" style="left:0px;width:34px;text-align:center;top:955.97px;font-size:14.5px;color:#222">29</div>
<div class="a" style="left:34px;top:328px;width:647px;height:21px;background:#fff"></div>
<div class="a" style="left:34px;top:372px;width:431px;height:21px;background:#fff"></div>
<div class="a" style="left:34px;top:394px;width:359px;height:21px;background:#fff"></div>
<div class="a" style="left:898px;top:438px;width:287px;height:21px;background:#fff"></div>
<div class="a" style="left:322px;top:460px;width:143px;height:21px;background:#fff"></div>
<div class="a" style="left:826px;top:460px;width:143px;height:21px;background:#fff"></div>
<div class="c cl" style="left:34px;top:328px;width:647px">Labour force characteristics by province, monthly, seasonally adjusted (x 1,000) 1 2 3</div>
<div class="c cl" style="left:34px;top:350px;width:71px">Monthly</div>
<div class="c cl" style="left:34px;top:372px;width:431px">Table: 14-10-0287-03 (formerly CANSIM 282-0087)</div>
<div class="c cl" style="left:34px;top:394px;width:359px">Geography: Canada, Province or territory</div>
<div class="c cl" style="left:34px;top:438px;width:71px">Sex</div>
<div class="c cl" style="left:106px;top:438px;width:71px">Age group</div>
<div class="c cl" style="left:178px;top:438px;width:71px">Statistics</div>
<div class="c cl" style="left:250px;top:438px;width:71px">Data type</div>
<div class="c cl" style="left:322px;top:438px;width:71px">Geography</div>
<div class="c cl" style="left:394px;top:438px;width:71px">Labour force</div>
<div class="c cr" style="left:466px;top:438px;width:71px">Nov-19</div>
<div class="c cr" style="left:538px;top:438px;width:71px">Oct-20</div>
<div class="c cr" style="left:610px;top:438px;width:71px">Nov-20</div>
<div class="c cl" style="left:682px;top:438px;width:71px">November 2019 to November 2020</div>
<div class="c cl" style="left:754px;top:438px;width:71px">October 2020 to November 2020</div>
<div class="c cl" style="left:826px;top:438px;width:71px">October 2020 to November 2020</div>
<div class="c cl" style="left:898px;top:438px;width:287px">November 2019 to November 2020</div>
<div class="c cl" style="left:34px;top:460px;width:71px">Both sexes</div>
<div class="c cl" style="left:106px;top:460px;width:71px">15 years and over</div>
<div class="c cl" style="left:178px;top:460px;width:71px">Estimate</div>
<div class="c cl" style="left:250px;top:460px;width:71px">Seasonally adjusted</div>
<div class="c cl" style="left:322px;top:460px;width:143px">Newfoundland and Labrador</div>
<div class="c cl" style="left:466px;top:460px;width:71px">Persons</div>
<div class="c cl" style="left:826px;top:460px;width:143px">Percentage change</div>
<div class="c cl" style="left:394px;top:482px;width:71px">Population</div>
<div class="c cr" style="left:466px;top:482px;width:71px">439.9</div>
<div class="c cr" style="left:538px;top:482px;width:71px">439.3</div>
<div class="c cr" style="left:610px;top:482px;width:71px">439.4</div>
<div class="c cr" style="left:682px;top:482px;width:71px">-0.5</div>
<div class="c cr" style="left:754px;top:482px;width:71px">0.1</div>
<div class="c cr" style="left:826px;top:482px;width:71px">0</div>
<div class="c cr" style="left:898px;top:482px;width:71px">-0.1</div>
<div class="c cl" style="left:394px;top:504px;width:71px">Labour force</div>
<div class="c cr" style="left:466px;top:504px;width:71px">254.7</div>
<div class="c cr" style="left:538px;top:504px;width:71px">254.7</div>
<div class="c cr" style="left:610px;top:504px;width:71px">255.6</div>
<div class="c cr" style="left:682px;top:504px;width:71px">0.9</div>
<div class="c cr" style="left:754px;top:504px;width:71px">0.9</div>
<div class="c cr" style="left:826px;top:504px;width:71px">0.4</div>
<div class="c cr" style="left:898px;top:504px;width:71px">0.4</div>
<div class="c cl" style="left:394px;top:526px;width:71px">Employment</div>
<div class="c cr" style="left:466px;top:526px;width:71px">225.8</div>
<div class="c cr" style="left:538px;top:526px;width:71px">222.1</div>
<div class="c cr" style="left:610px;top:526px;width:71px">224.4</div>
<div class="c cr" style="left:682px;top:526px;width:71px">-1.4</div>
<div class="c cr" style="left:754px;top:526px;width:71px">2.3</div>
<div class="c cr" style="left:826px;top:526px;width:71px">1</div>
<div class="c cr" style="left:898px;top:526px;width:71px">-0.6</div>
<div class="c cl" style="left:394px;top:548px;width:71px">Unemployment</div>
<div class="c cr" style="left:466px;top:548px;width:71px">28.8</div>
<div class="c cr" style="left:538px;top:548px;width:71px">32.7</div>
<div class="c cr" style="left:610px;top:548px;width:71px">31.3</div>
<div class="c cr" style="left:682px;top:548px;width:71px">2.5</div>
<div class="c cr" style="left:754px;top:548px;width:71px">-1.4</div>
<div class="c cr" style="left:826px;top:548px;width:71px">-4.3</div>
<div class="c cr" style="left:898px;top:548px;width:71px">8.7</div>
<div class="c cl" style="left:394px;top:570px;width:71px">Population</div>
<div class="c cl" style="left:322px;top:570px;width:71px">Prince Edward Island</div>
<div class="c cr" style="left:466px;top:570px;width:71px">129.9</div>
<div class="c cr" style="left:538px;top:570px;width:71px">132</div>
<div class="c cr" style="left:610px;top:570px;width:71px">132.2</div>
<div class="c cr" style="left:682px;top:570px;width:71px">2.3</div>
<div class="c cr" style="left:754px;top:570px;width:71px">0.2</div>
<div class="c cr" style="left:826px;top:570px;width:71px">0.2</div>
<div class="c cr" style="left:898px;top:570px;width:71px">1.8</div>
<div class="c cl" style="left:394px;top:592px;width:71px">Labour force</div>
<div class="c cr" style="left:466px;top:592px;width:71px">86</div>
<div class="c cr" style="left:538px;top:592px;width:71px">84.9</div>
<div class="c cr" style="left:610px;top:592px;width:71px">86.3</div>
<div class="c cr" style="left:682px;top:592px;width:71px">0.3</div>
<div class="c cr" style="left:754px;top:592px;width:71px">1.4</div>
<div class="c cr" style="left:826px;top:592px;width:71px">1.6</div>
<div class="c cr" style="left:898px;top:592px;width:71px">0.3</div>
<div class="c cl" style="left:394px;top:614px;width:71px">Employment</div>
<div class="c cr" style="left:466px;top:614px;width:71px">79.1</div>
<div class="c cr" style="left:538px;top:614px;width:71px">76.4</div>
<div class="c cr" style="left:610px;top:614px;width:71px">77.4</div>
<div class="c cr" style="left:682px;top:614px;width:71px">-1.7</div>
<div class="c cr" style="left:754px;top:614px;width:71px">1</div>
<div class="c cr" style="left:826px;top:614px;width:71px">1.3</div>
<div class="c cr" style="left:898px;top:614px;width:71px">-2.1</div>
<div class="c cl" style="left:394px;top:636px;width:71px">Unemployment</div>
<div class="c cr" style="left:466px;top:636px;width:71px">6.9</div>
<div class="c cr" style="left:538px;top:636px;width:71px">8.5</div>
<div class="c cr" style="left:610px;top:636px;width:71px">8.8</div>
<div class="c cr" style="left:682px;top:636px;width:71px">1.9</div>
<div class="c cr" style="left:754px;top:636px;width:71px">0.3</div>
<div class="c cr" style="left:826px;top:636px;width:71px">3.5</div>
<div class="c cr" style="left:898px;top:636px;width:71px">27.5</div>
<div class="c cl" style="left:394px;top:658px;width:71px">Population</div>
<div class="c cl" style="left:322px;top:658px;width:71px">Nova Scotia</div>
<div class="c cr" style="left:466px;top:658px;width:71px">811.6</div>
<div class="c cr" style="left:538px;top:658px;width:71px">819.4</div>
<div class="c cr" style="left:610px;top:658px;width:71px">820</div>
<div class="c cr" style="left:682px;top:658px;width:71px">8.4</div>
<div class="c cr" style="left:754px;top:658px;width:71px">0.6</div>
<div class="c cr" style="left:826px;top:658px;width:71px">0.1</div>
<div class="c cr" style="left:898px;top:658px;width:71px">1</div>
<div class="c cl" style="left:394px;top:680px;width:71px">Labour force</div>
<div class="c cr" style="left:466px;top:680px;width:71px">506.6</div>
<div class="c cr" style="left:538px;top:680px;width:71px">502.4</div>
<div class="c cr" style="left:610px;top:680px;width:71px">500.7</div>
<div class="c cr" style="left:682px;top:680px;width:71px">-5.9</div>
<div class="c cr" style="left:754px;top:680px;width:71px">-1.7</div>
<div class="c cr" style="left:826px;top:680px;width:71px">-0.3</div>
<div class="c cr" style="left:898px;top:680px;width:71px">-1.2</div>
<div class="c cl" style="left:394px;top:702px;width:71px">Employment</div>
<div class="c cr" style="left:466px;top:702px;width:71px">466.8</div>
<div class="c cr" style="left:538px;top:702px;width:71px">458.5</div>
<div class="c cr" style="left:610px;top:702px;width:71px">468.5</div>
<div class="c cr" style="left:682px;top:702px;width:71px">1.7</div>
<div class="c cr" style="left:754px;top:702px;width:71px">10</div>
<div class="c cr" style="left:826px;top:702px;width:71px">2.2</div>
<div class="c cr" style="left:898px;top:702px;width:71px">0.4</div>
<div class="c cl" style="left:394px;top:724px;width:71px">Unemployment</div>
<div class="c cr" style="left:466px;top:724px;width:71px">39.8</div>
<div class="c cr" style="left:538px;top:724px;width:71px">43.8</div>
<div class="c cr" style="left:610px;top:724px;width:71px">32.2</div>
<div class="c cr" style="left:682px;top:724px;width:71px">-7.6</div>
<div class="c cr" style="left:754px;top:724px;width:71px">-11.6</div>
<div class="c cr" style="left:826px;top:724px;width:71px">-26.5</div>
<div class="c cr" style="left:898px;top:724px;width:71px">-19.1</div>
<div class="c cl" style="left:394px;top:746px;width:71px">Population</div>
<div class="c cl" style="left:322px;top:746px;width:71px">New Brunswick</div>
<div class="c cr" style="left:466px;top:746px;width:71px">634.1</div>
<div class="c cr" style="left:538px;top:746px;width:71px">637.9</div>
<div class="c cr" style="left:610px;top:746px;width:71px">638.1</div>
<div class="c cr" style="left:682px;top:746px;width:71px">4</div>
<div class="c cr" style="left:754px;top:746px;width:71px">0.2</div>
<div class="c cr" style="left:826px;top:746px;width:71px">0</div>
<div class="c cr" style="left:898px;top:746px;width:71px">0.6</div>
<div class="c cl" style="left:394px;top:768px;width:71px">Labour force</div>
<div class="c cr" style="left:466px;top:768px;width:71px">385</div>
<div class="c cr" style="left:538px;top:768px;width:71px">392.3</div>
<div class="c cr" style="left:610px;top:768px;width:71px">394.5</div>
<div class="c cr" style="left:682px;top:768px;width:71px">9.5</div>
<div class="c cr" style="left:754px;top:768px;width:71px">2.2</div>
<div class="c cr" style="left:826px;top:768px;width:71px">0.6</div>
<div class="c cr" style="left:898px;top:768px;width:71px">2.5</div>
<div class="c cl" style="left:394px;top:790px;width:71px">Employment</div>
<div class="c cr" style="left:466px;top:790px;width:71px">354.8</div>
<div class="c cr" style="left:538px;top:790px;width:71px">352.7</div>
<div class="c cr" style="left:610px;top:790px;width:71px">356.9</div>
<div class="c cr" style="left:682px;top:790px;width:71px">2.1</div>
<div class="c cr" style="left:754px;top:790px;width:71px">4.2</div>
<div class="c cr" style="left:826px;top:790px;width:71px">1.2</div>
<div class="c cr" style="left:898px;top:790px;width:71px">0.6</div>
<div class="c cl" style="left:394px;top:812px;width:71px">Unemployment</div>
<div class="c cr" style="left:466px;top:812px;width:71px">30.3</div>
<div class="c cr" style="left:538px;top:812px;width:71px">39.6</div>
<div class="c cr" style="left:610px;top:812px;width:71px">37.7</div>
<div class="c cr" style="left:682px;top:812px;width:71px">7.4</div>
<div class="c cr" style="left:754px;top:812px;width:71px">-1.9</div>
<div class="c cr" style="left:826px;top:812px;width:71px">-4.8</div>
<div class="c cr" style="left:898px;top:812px;width:71px">24.4</div>
<div class="c cl" style="left:394px;top:834px;width:71px">Population</div>
<div class="c cl" style="left:322px;top:834px;width:71px">Quebec</div>
<div class="c cr" style="left:466px;top:834px;width:71px">7,077.00</div>
<div class="c cr" style="left:538px;top:834px;width:71px">7,137.50</div>
<div class="c cr" style="left:610px;top:834px;width:71px">7,142.70</div>
<div class="c cr" style="left:682px;top:834px;width:71px">65.7</div>
<div class="c cr" style="left:754px;top:834px;width:71px">5.2</div>
<div class="c cr" style="left:826px;top:834px;width:71px">0.1</div>
<div class="c cr" style="left:898px;top:834px;width:71px">0.9</div>
<div class="c cl" style="left:394px;top:856px;width:71px">Labour force</div>
<div class="c cr" style="left:466px;top:856px;width:71px">4,579.30</div>
<div class="c cr" style="left:538px;top:856px;width:71px">4,612.20</div>
<div class="c cr" style="left:610px;top:856px;width:71px">4,603.40</div>
<div class="c cr" style="left:682px;top:856px;width:71px">24.1</div>
<div class="c cr" style="left:754px;top:856px;width:71px">-8.8</div>
<div class="c cr" style="left:826px;top:856px;width:71px">-0.2</div>
<div class="c cr" style="left:898px;top:856px;width:71px">0.5</div>
<div class="c cl" style="left:394px;top:878px;width:71px">Employment</div>
<div class="c cr" style="left:466px;top:878px;width:71px">4,324.50</div>
<div class="c cr" style="left:538px;top:878px;width:71px">4,258.00</div>
<div class="c cr" style="left:610px;top:878px;width:71px">4,273.70</div>
<div class="c cr" style="left:682px;top:878px;width:71px">-50.8</div>
<div class="c cr" style="left:754px;top:878px;width:71px">15.7</div>
<div class="c cr" style="left:826px;top:878px;width:71px">0.4</div>
<div class="c cr" style="left:898px;top:878px;width:71px">-1.2</div>
<div class="c cl" style="left:394px;top:900px;width:71px">Unemployment</div>
<div class="c cr" style="left:466px;top:900px;width:71px">254.7</div>
<div class="c cr" style="left:538px;top:900px;width:71px">354.2</div>
<div class="c cr" style="left:610px;top:900px;width:71px">329.7</div>
<div class="c cr" style="left:682px;top:900px;width:71px">75</div>
<div class="c cr" style="left:754px;top:900px;width:71px">-24.5</div>
<div class="c cr" style="left:826px;top:900px;width:71px">-6.9</div>
<div class="c cr" style="left:898px;top:900px;width:71px">29.4</div>
<div class="c cl" style="left:394px;top:922px;width:71px">Population</div>
<div class="c cl" style="left:322px;top:922px;width:71px">Ontario</div>
<div class="c cr" style="left:466px;top:922px;width:71px"><span class=h>########</span></div>
<div class="c cr" style="left:538px;top:922px;width:71px"><span class=h>########</span></div>
<div class="c cr" style="left:610px;top:922px;width:71px"><span class=h>########</span></div>
<div class="c cr" style="left:682px;top:922px;width:71px">154.3</div>
<div class="c cr" style="left:754px;top:922px;width:71px">11.7</div>
<div class="c cr" style="left:826px;top:922px;width:71px">0.1</div>
<div class="c cr" style="left:898px;top:922px;width:71px">1.3</div>
<div class="c cl" style="left:394px;top:944px;width:71px">Labour force</div>
<div class="c cr" style="left:466px;top:944px;width:71px">7,965.60</div>
<div class="c cr" style="left:538px;top:944px;width:71px">8,035.30</div>
<div class="c cr" style="left:610px;top:944px;width:71px">8,037.50</div>
<div class="c cr" style="left:682px;top:944px;width:71px">71.9</div>
<div class="c cr" style="left:754px;top:944px;width:71px">2.2</div>
<div class="c cr" style="left:826px;top:944px;width:71px">0</div>
<div class="c cr" style="left:898px;top:944px;width:71px">0.9</div>
<div class="a" style="left:0px;top:953px;width:1920px;height:35px;background:#e6e6e6"></div>
<div class="a" style="left:0px;top:953px;width:1890px;height:1px;background:#9e9e9e"></div>
<div class="a" style="left:0px;top:987px;width:1920px;height:1px;background:#c8c8c8"></div>
<svg class="a" style="left:28px;top:962px;" width="8" height="14" viewBox="0 0 8 14"><path d="M7 0v14L0 7z" fill="#c6c6c6"/></svg>
<svg class="a" style="left:62px;top:962px;" width="8" height="14" viewBox="0 0 8 14"><path d="M0 0v14L7 7z" fill="#c6c6c6"/></svg>
<div class="a" style="left:118px;top:957px;width:1px;height:26px;background:#9e9e9e"></div>
<div class="t" style="left:137.30px;top:968.05px;font-size:20.06px;color:#444;font-weight:400;">Employment Nov 2020</div>
<div class="a" style="left:360px;top:957px;width:1px;height:26px;background:#9e9e9e"></div>
<div class="t" style="left:374.05px;top:968.47px;font-size:18.82px;color:#444;font-weight:400;">Source</div>
<div class="a" style="left:448px;top:953px;width:112px;height:31px;background:#fff;border-left:1px solid #c6c6c6;border-right:1px solid #c6c6c6;box-sizing:border-box"></div>
<div class="a" style="left:448px;top:981px;width:112px;height:3px;background:#217346"></div>
<div class="t" style="left:460.31px;top:968.14px;font-size:19.77px;color:#1d6b40;font-weight:700;">Raw data</div>
<svg class="a" style="left:598px;top:958px;" width="24" height="24" viewBox="0 0 24 24"><circle cx="12" cy="12" r="10.5" fill="none" stroke="#7a7a7a" stroke-width="1.5"/><path d="M12 6v12M6 12h12" stroke="#7a7a7a" stroke-width="1.6"/></svg>
<div class="a" style="left:1148px;top:962px;width:3px;height:3px;background:#9e9e9e"></div>
<div class="a" style="left:1148px;top:968px;width:3px;height:3px;background:#9e9e9e"></div>
<div class="a" style="left:1148px;top:974px;width:3px;height:3px;background:#9e9e9e"></div>
<div class="a" style="left:1168px;top:957px;width:723px;height:25px;background:#fff;border:1px solid #c6c6c6;box-sizing:border-box"></div>
<div class="a" style="left:1192px;top:957px;width:1.5px;height:25px;background:#a6a6a6"></div>
<svg class="a" style="left:1176px;top:964px;" width="7" height="12" viewBox="0 0 7 12"><path d="M7 0v12L0 6z" fill="#707070"/></svg>
<div class="a" style="left:1838px;top:958px;width:28px;height:23px;background:#e6e6e6"></div>
<div class="a" style="left:1866px;top:957px;width:1px;height:25px;background:#c6c6c6"></div>
<svg class="a" style="left:1876px;top:964px;" width="7" height="12" viewBox="0 0 7 12"><path d="M0 0v12L7 6z" fill="#707070"/></svg>
<div class="a" style="left:1890px;top:304px;width:30px;height:649px;background:#e6e6e6"></div>
<div class="a" style="left:1892px;top:306px;width:25px;height:25px;background:#fff;border:1px solid #c6c6c6;box-sizing:border-box"></div>
<svg class="a" style="left:1899px;top:314px;" width="11" height="7" viewBox="0 0 11 7"><path d="M0 7h11L5.5 0z" fill="#707070"/></svg>
<div class="a" style="left:1892px;top:331px;width:25px;height:262px;background:#fff;border:1px solid #c6c6c6;box-sizing:border-box"></div>
<div class="a" style="left:1892px;top:930px;width:25px;height:24px;background:#fff;border:1px solid #c6c6c6;box-sizing:border-box"></div>
<svg class="a" style="left:1899px;top:939px;" width="11" height="7" viewBox="0 0 11 7"><path d="M0 0h11L5.5 7z" fill="#707070"/></svg>
<div class="a" style="left:0px;top:988px;width:1920px;height:32px;background:#f3f2f1"></div>
<div class="a" style="left:1475px;top:988px;width:60px;height:32px;background:#c8c6c4"></div>
<svg class="a" style="left:1494px;top:994px;" width="20" height="19" viewBox="0 0 20 19"><g fill="#333"><rect x="0" y="0" width="20" height="19"/></g><g fill="#c8c6c4"><rect x="2" y="2" width="4.2" height="4"/><rect x="7.9" y="2" width="4.2" height="4"/><rect x="13.8" y="2" width="4.2" height="4"/><rect x="2" y="7.5" width="4.2" height="4"/><rect x="7.9" y="7.5" width="4.2" height="4"/><rect x="13.8" y="7.5" width="4.2" height="4"/><rect x="2" y="13" width="4.2" height="4"/><rect x="7.9" y="13" width="4.2" height="4"/><rect x="13.8" y="13" width="4.2" height="4"/></g></svg>
<svg class="a" style="left:1554px;top:993px;" width="22" height="20" viewBox="0 0 22 20"><g fill="none" stroke="#444" stroke-width="1.6"><rect x="1" y="1" width="20" height="18"/><rect x="5" y="4.5" width="12" height="11"/><path d="M7.5 8h7M7.5 10.5h7M7.5 13h7" stroke-width="1.2"/></g></svg>
<svg class="a" style="left:1614px;top:993px;" width="22" height="20" viewBox="0 0 22 20"><g fill="none" stroke="#444" stroke-width="1.6"><rect x="1" y="1" width="20" height="18"/><path d="M7 1v9h6V1"/></g></svg>
<div class="a" style="left:1663px;top:1003px;width:12px;height:1px;background:#555"></div>
<div class="a" style="left:1683px;top:1003px;width:148px;height:2px;background:#c0c0c0"></div>
<div class="a" style="left:1756px;top:997px;width:1px;height:13px;background:#b0b0b0"></div>
<div class="a" style="left:1734px;top:995px;width:9px;height:17px;background:#6e6e6e"></div>
<svg class="a" style="left:1838px;top:997px;" width="13" height="13" viewBox="0 0 13 13"><path d="M6.5 0v13M0 6.5h13" stroke="#555" stroke-width="1.5"/></svg>
<div class="t" style="left:1868.61px;top:1004.54px;font-size:15.76px;color:#444;font-weight:400;">75%</div>
<div class="a" style="left:0px;top:1020px;width:1920px;height:60px;background:linear-gradient(to right,#ddd6d5 0px,#dad8d8 600px,#d9d8d8 760px,#ded6d4 900px,#ddd7d6 1040px,#d8d7d7 1200px,#d7d7d7 1450px,#d8d6d6 1620px,#dcd6d5 1700px,#dcd5d4 1920px)"></div>
<div class="a" style="left:0px;top:1020px;width:73px;height:60px;background:#e0d9d8"></div>
<svg class="a" style="left:22px;top:1037px;" width="26" height="26" viewBox="0 0 26 26"><g fill="#000"><path d="M0 3.6L10.5 2.2V12.3H0z"/><path d="M11.7 2L26 0V12.3H11.7z"/><path d="M0 13.5H10.5V23.7L0 22.3z"/><path d="M11.7 13.5H26V26L11.7 24z"/></g></svg>
<div class="a" style="left:73px;top:1021px;width:513px;height:58px;background:#fff"></div>
<svg class="a" style="left:89px;top:1037px;" width="25" height="25" viewBox="0 0 25 25"><g fill="none" stroke="#000" stroke-width="1.7"><circle cx="16" cy="9" r="7.3"/><path d="M10.8 14.2L1.5 23.5"/></g></svg>
<div class="t" style="left:132.15px;top:1052.84px;font-size:22.39px;color:#2b2b2b;font-weight:400;">Type here to search</div>
<svg class="a" style="left:610px;top:1031px;" width="38" height="38" viewBox="0 0 38 38"><g transform="rotate(45 19 19)"><rect x="6.5" y="6.5" width="12" height="12" rx="2" fill="#f07272"/><rect x="19.5" y="6.5" width="12" height="12" rx="2" fill="#74c858"/><rect x="6.5" y="19.5" width="12" height="12" rx="2" fill="#70a9f3"/><rect x="19.5" y="19.5" width="12" height="12" rx="2" fill="#f4da72"/></g><path d="M16 9l3 4v18M19 18l5 5" stroke="#f2f2f2" stroke-width="1.6" fill="none"/><circle cx="19" cy="31" r="2" fill="#e8e8e8" stroke="#666" stroke-width="0.8"/><circle cx="24.5" cy="23" r="1.8" fill="#e8e8e8" stroke="#666" stroke-width="0.8"/></svg>
<svg class="a" style="left:686px;top:1032px;" width="36" height="36" viewBox="0 0 36 36"><rect x="0" y="0" width="36" height="36" rx="10" fill="#3b8bf0"/><rect x="7" y="12" width="15" height="12" rx="2.5" fill="#fff"/><path d="M23 16l6-4v12l-6-4z" fill="#fff"/></svg>
<svg class="a" style="left:761px;top:1035px;" width="36" height="30" viewBox="0 0 36 30"><path d="M1.5 1.5h10l3 3h-13.5z" fill="#e0a81e"/><rect x="1.5" y="4" width="33" height="24" rx="1" fill="#f8d36a"/><path d="M1.5 7h33" stroke="#eebf45" stroke-width="1"/><path d="M10 28V17.5h16V28h-4.5v-6h-7v6z" fill="#2a87d5"/></svg>
<svg class="a" style="left:836px;top:1032px;" width="36" height="36" viewBox="0 0 36 36"><path d="M18 18L3.28 9.5A17 17 0 0 1 32.72 9.5z" fill="#db4437"/><path d="M18 18L32.72 9.5A17 17 0 0 1 18 35z" fill="#f4c20d"/><path d="M18 18L18 35A17 17 0 0 1 3.28 9.5z" fill="#0f9d58"/><circle cx="18" cy="18" r="8.3" fill="#fff"/><circle cx="18" cy="18" r="6.6" fill="#4285f4"/></svg>
<svg class="a" style="left:910px;top:1031px;" width="42" height="42" viewBox="0 0 42 42"><rect x="11" y="3" width="24" height="32" rx="2" fill="#0a64b8"/><rect x="18" y="8" width="8.5" height="7" fill="#28a8ea"/><rect x="26.5" y="8" width="8.5" height="7" fill="#50d9ff"/><rect x="18" y="15" width="8.5" height="8" fill="#0078d4"/><rect x="26.5" y="15" width="8.5" height="8" fill="#28a8ea"/><rect x="11" y="24" width="8" height="11" fill="#1ba1e2"/><rect x="18.4" y="24" width="21.6" height="16" fill="#e9b46e"/><path d="M18.4 24.5l10.8 8 10.8-8" fill="none" stroke="#fff" stroke-width="1.5"/><rect x="1" y="10" width="17.7" height="17.4" rx="1.5" fill="#0f6cbd"/><text x="9.8" y="24" font-family="Liberation Sans" font-size="13" font-weight="700" fill="#fff" text-anchor="middle">O</text></svg>
<svg class="a" style="left:985px;top:1032px;" width="38" height="36" viewBox="0 0 38 36"><rect x="10" y="1" width="26" height="33" rx="2" fill="#c66ce8"/><rect x="26" y="1" width="10" height="11" fill="#b04fd8"/><rect x="26" y="12" width="10" height="11" fill="#9a35c8"/><rect x="26" y="23" width="10" height="11" fill="#7a1fa8"/><rect x="1" y="7" width="19" height="19" rx="2" fill="#7719aa"/><text x="10.5" y="22" font-family="Liberation Sans" font-size="14" font-weight="700" fill="#fff" text-anchor="middle">N</text></svg>
<svg class="a" style="left:1061px;top:1032px;" width="36" height="36" viewBox="0 0 36 36"><circle cx="18" cy="18" r="17.5" fill="#75aadb"/><text x="18" y="27" font-family="Liberation Serif" font-size="26" fill="#fff" text-anchor="middle">R</text></svg>
<div class="a" style="left:1118px;top:1020px;width:73px;height:60px;background:#ebe8e7"></div>
<svg class="a" style="left:1136px;top:1032px;" width="38" height="36" viewBox="0 0 38 36"><rect x="10" y="1" width="26" height="34" rx="2" fill="#21a366"/><rect x="22" y="1" width="14" height="11" fill="#33c481"/><rect x="10" y="12" width="26" height="11" fill="#107c41"/><rect x="22" y="23" width="14" height="12" fill="#185c37"/><rect x="1" y="8" width="19" height="19" rx="2" fill="#107c41"/><text x="10.5" y="23" font-family="Liberation Sans" font-size="14" font-weight="700" fill="#fff" text-anchor="middle">X</text></svg>
<div class="a" style="left:749px;top:1077px;width:61px;height:3px;background:#cf6a30"></div>
<div class="a" style="left:824px;top:1077px;width:61px;height:3px;background:#cf6a30"></div>
<div class="a" style="left:899px;top:1077px;width:61px;height:3px;background:#cf6a30"></div>
<div class="a" style="left:1049px;top:1077px;width:61px;height:3px;background:#cf6a30"></div>
<div class="a" style="left:1118px;top:1077px;width:73px;height:3px;background:#cf6a30"></div>
<svg class="a" style="left:1493px;top:1044px;" width="18" height="11" viewBox="0 0 18 11"><path d="M1 10L9 2l8 8" fill="none" stroke="#111" stroke-width="1.5"/></svg>
<svg class="a" style="left:1540px;top:1041px;" width="22" height="20" viewBox="0 0 22 20"><g fill="none" stroke="#111" stroke-width="1.4"><path d="M1 18A17 17 0 0 1 18 1"/><path d="M5 18A13 13 0 0 1 18 5"/><path d="M9 18A9 9 0 0 1 18 9"/></g><circle cx="17.5" cy="17.5" r="1.8" fill="#111"/></svg>
<svg class="a" style="left:1586px;top:1040px;" width="24" height="20" viewBox="0 0 24 20"><path d="M1 7h4l6-5v16l-6-5H1z" fill="none" stroke="#111" stroke-width="1.4"/><g fill="none" stroke="#111" stroke-width="1.4"><path d="M14 7a4 4 0 0 1 0 6"/></g><g fill="none" stroke="#888" stroke-width="1.3"><path d="M17 4.5a7 7 0 0 1 0 11"/><path d="M20 2a10.5 10.5 0 0 1 0 16"/></g></svg>
<div class="a" style="left:1622px;top:1020px;width:60px;height:60px;background:#ebe9e8"></div>
<svg class="a" style="left:1641px;top:1039px;" width="22" height="22" viewBox="0 0 22 22"><g fill="none" stroke="#111" stroke-width="1.4"><path d="M7 19L18 4c1-1.5 3-0.5 2 1L9 20z"/><path d="M6 21c-4 0-5-3-3-5s5-1 8 0c4 1 9-1 10-4"/></g></svg>
<div class="t" style="left:1691.73px;top:1051.51px;font-size:15.85px;color:#111;font-weight:400;">ENG</div>
<div class="t" style="left:1754.79px;top:1036.87px;font-size:17.67px;color:#111;font-weight:400;">5:05 PM</div>
<div class="t" style="left:1741.59px;top:1064.52px;font-size:18.70px;color:#111;font-weight:400;">12/29/2020</div>
<svg class="a" style="left:1857px;top:1037px;" width="27" height="26" viewBox="0 0 27 26"><path d="M1 1h24v17H13l-4 5v-5H1z" fill="#111"/><g stroke="#fff" stroke-width="1.3"><path d="M6 6h14M6 9.5h14M6 13h9"/></g><circle cx="20" cy="19" r="5" fill="#111" stroke="#fff" stroke-width="1.3"/><path d="M17.5 19a3 3 0 0 0 5 2" fill="none" stroke="#fff" stroke-width="1.2"/></svg>
<div class="a" style="left:1912px;top:1020px;width:1px;height:60px;background:#a8a8a8"></div>
<div class="a" style="left:1960px;top:1097px;width:8px;height:8px;background:#e81123;border-radius:50%"></div>
</body></html>
